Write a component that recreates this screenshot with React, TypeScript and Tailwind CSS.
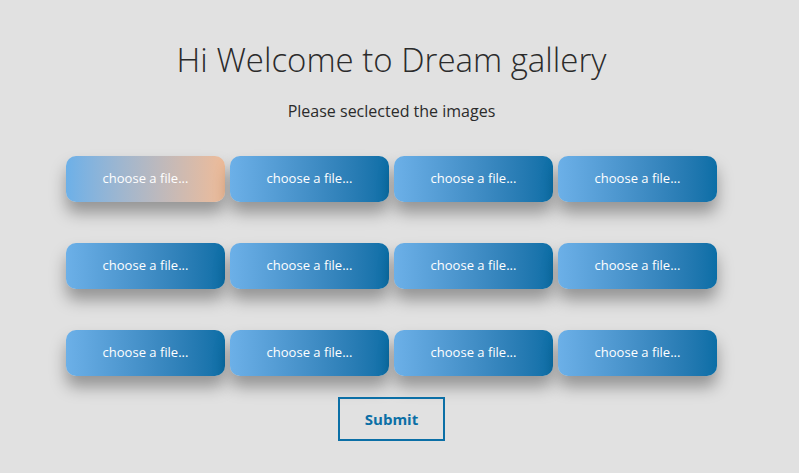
import React from 'react';

const slots = Array.from({ length: 12 }, (_, i) => i);

export default function App() {
  return (
    <div className="min-h-screen w-full bg-[#e1e1e1] font-['Open_Sans',sans-serif]">
      <div className="flex w-[783px] flex-col items-center pt-[34px]">
        <h1 className="text-[33px] font-light leading-[52px] text-[#2b2b2b]">Hi Welcome to Dream gallery</h1>
        <p className="mt-[13px] text-[16px] leading-[24px] text-[#2b2b2b]">Please seclected the images</p>

        <div className="mt-[33px] grid grid-cols-[repeat(4,159px)] gap-x-[5px] gap-y-[41px]">
          {slots.map((i) => (
            <label
              key={i}
              className={
                i === 0
                  ? 'flex h-[46px] cursor-pointer items-center justify-center rounded-[10px] bg-gradient-to-r from-[#6cb0e8] to-[#eebb98] text-[13px] text-white shadow-[0_11px_16px_rgba(0,0,0,0.34)]'
                  : 'flex h-[46px] cursor-pointer items-center justify-center rounded-[10px] bg-gradient-to-r from-[#6cb0e8] to-[#0a6ea6] text-[13px] text-white shadow-[0_11px_16px_rgba(0,0,0,0.34)]'
              }
            >
              <input type="file" className="hidden" />
              choose a file...
            </label>
          ))}
        </div>

        <button className="mt-[21px] h-[44px] w-[107px] border-2 border-[#0b6fa6] text-[15px] font-bold text-[#0b6fa6]">
          Submit
        </button>
      </div>
    </div>
  );
}
